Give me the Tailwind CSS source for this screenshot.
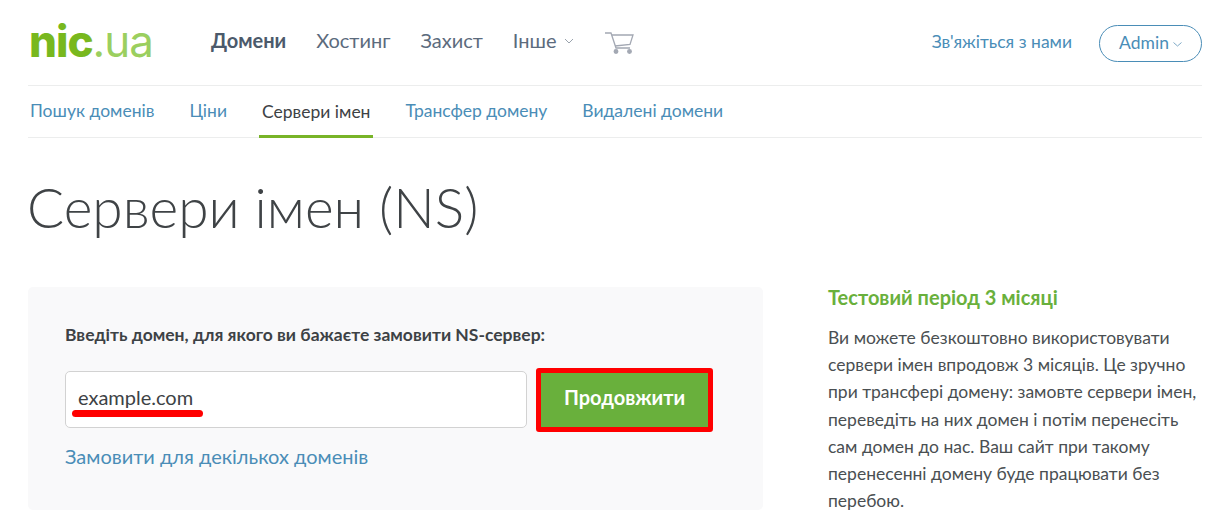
<!DOCTYPE html>
<html lang="uk">
<head>
    <meta charset="UTF-8">
    <title>Сервери імен (NS) - nic.ua</title>
    <script src="https://cdn.jsdelivr.net/npm/@tailwindcss/browser@4"></script>
</head>
<body class="bg-white h-[521px] overflow-hidden font-['Lato','Noto_Sans',sans-serif] text-[#3d4245]">
    <div class="mx-[28px] w-[1174px]">
        <!-- Main nav -->
        <header class="flex items-center h-[86px] border-b border-[#eceded]">
            <a href="#" class="w-[183px] pl-px text-[44px] leading-none tracking-[-1px] font-['Inter',sans-serif] pb-[3px]"><span class="font-extrabold text-[#78b81e]">nic</span><span class="font-normal text-[#9bcf5f]">.ua</span></a>
            <nav class="flex items-center text-[20px] text-[#5c6b7d] pb-[5px]">
                <a href="#" class="font-bold text-[#4c5a6b] mr-[30px]">Домени</a>
                <a href="#" class="mr-[30px]">Хостинг</a>
                <a href="#" class="mr-[30px]">Захист</a>
                <a href="#" class="flex items-center mr-[32px]">Інше
                    <svg class="ml-[7px] mt-[2px]" width="10" height="6" viewBox="0 0 10 6" fill="none" stroke="#9aa3ad" stroke-width="1"><path d="M1 1l4 4 4-4"/></svg>
                </a>
                <svg class="-ml-[1px] mt-[6px]" width="29" height="23" viewBox="0 0 29 23" fill="none" stroke="#a3a8b3" stroke-width="1.300">
                    <path d="M0 1h6l5 15h14"/>
                    <path d="M7 3h21l-3 9.500-15 1.500"/>
                    <circle cx="11" cy="19.500" r="1.800" fill="#a3a8b3"/>
                    <circle cx="24.500" cy="19.500" r="1.800" fill="#a3a8b3"/>
                </svg>
            </nav>
            <a href="#" class="ml-auto mr-[27px] text-[17.500px] text-[#4a8db7]">Зв'яжіться з нами</a>
            <a href="#" class="flex items-center justify-center w-[103px] h-[37px] mt-[1px] rounded-full border border-[#4a8db7] text-[17.500px] text-[#4a8db7]">Admin
                <svg class="ml-[4px] mt-[2px]" width="9" height="5" viewBox="0 0 9 5" fill="none" stroke="#7fa9c6" stroke-width="1"><path d="M.5.5l4 3.500 4-3.500"/></svg>
            </a>
        </header>

        <!-- Sub nav -->
        <nav class="flex h-[52px] border-b border-[#eceded] text-[17.500px] text-[#4a8db7]">
            <a href="#" class="flex items-center pl-[2px] mr-[35px]">Пошук доменів</a>
            <a href="#" class="flex items-center mr-[32px]">Ціни</a>
            <a href="#" class="flex items-center px-[3px] mr-[32px] text-[#3d4245] border-b-[3px] border-[#78b428] h-[52px] pt-[3px]">Сервери імен</a>
            <a href="#" class="flex items-center mr-[35px]">Трансфер домену</a>
            <a href="#" class="flex items-center">Видалені домени</a>
        </nav>

        <h1 class="mt-[34px] -ml-px text-[55px] leading-[70px] font-light text-[#3f4346]">Сервери імен (NS)</h1>

        <div class="flex mt-[45px]">
            <!-- Form card -->
            <section class="w-[735px] h-[223px] shrink-0 rounded-[5px] bg-[#f9f9fa] px-[37px] pt-[36px]">
                <p class="text-[17.500px] leading-[24px] font-bold">Введіть домен, для якого ви бажаєте замовити NS-сервер:</p>
                <div class="flex mt-[24px]">
                    <div class="relative w-[462px] h-[57px] rounded-[5px] border border-[#d2d2d2] bg-white pl-[12px] text-[20px] leading-[51px]">
                        example.com
                        <span class="absolute left-[6px] top-[38px] w-[131px] h-[7px] rounded-full bg-[#ff0000]"></span>
                    </div>
                    <button class="ml-[9px] -mt-[3px] w-[177px] h-[64px] pb-[7px] rounded-[3px] border-[5px] border-[#ff0000] bg-[#69b03c] text-[20px] font-bold text-white">Продовжити</button>
                </div>
                <a href="#" class="block mt-[10px] text-[20px] leading-[28px] text-[#4a8db7]">Замовити для декількох доменів</a>
            </section>

            <!-- Sidebar -->
            <aside class="ml-[65px] w-[372px] -mt-[2px]">
                <h3 class="text-[20px] leading-[24px] font-bold text-[#69b03c]">Тестовий період 3 місяці</h3>
                <p class="mt-[15px] text-[17.500px] leading-[27.200px] text-[#4a4f52]">Ви можете безкоштовно використовувати сервери імен впродовж 3 місяців. Це зручно при трансфері домену: замовте сервери імен, переведіть на них домен і потім перенесіть сам домен до нас. Ваш сайт при такому перенесенні домену буде працювати без перебою.</p>
            </aside>
        </div>
    </div>
</body>
</html>
